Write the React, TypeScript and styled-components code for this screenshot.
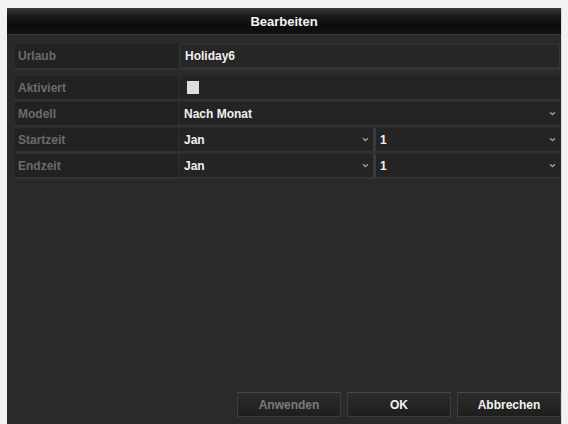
import React from 'react';
import styled, { createGlobalStyle } from 'styled-components';

const GlobalStyle = createGlobalStyle`
  html, body {
    margin: 0;
    padding: 0;
    background: #f2f2f2;
  }
  body {
    font-family: "Liberation Sans", Arial, sans-serif;
  }
`;

const Page = styled.div`
  width: 568px;
  height: 424px;
  padding: 8px 0 0 7px;
  box-sizing: border-box;
  overflow: hidden;
`;

const Dialog = styled.div`
  width: 554px;
  height: 416px;
  background: #2a2a2a;
  display: flex;
  flex-direction: column;
  box-shadow: 1px 0 0 #d8d8d8;
`;

const TitleBar = styled.div`
  height: 26px;
  background: linear-gradient(#3c3c3c 0%, #1a1a1a 30%, #0c0c0c 70%, #121212 100%);
  border-bottom: 1px solid #3a3a3a;
  display: flex;
  align-items: center;
  justify-content: center;
  color: #f4f4f4;
  font-size: 13px;
  font-weight: bold;
`;

const Form = styled.div`
  padding: 9px 1px 0 8px;
  display: flex;
  flex-direction: column;
`;

const Row = styled.div<{ $first?: boolean }>`
  display: grid;
  grid-template-columns: 163px 1fr;
  column-gap: 2px;
  height: ${(p) => (p.$first ? 24 : 23)}px;
  margin-bottom: ${(p) => (p.$first ? 8 : 3)}px;
  box-shadow: 0 2px 0 #333333;
`;

const Label = styled.div`
  background: #222222;
  color: #6b6b6b;
  font-size: 12px;
  font-weight: bold;
  display: flex;
  align-items: center;
  padding-left: 3px;
`;

const Value = styled.div<{ $boxed?: boolean }>`
  background: ${(p) => (p.$boxed ? '#262626' : '#242424')};
  border: ${(p) => (p.$boxed ? '1px solid #343434' : 'none')};
  color: #f0f0f0;
  font-size: 12px;
  font-weight: bold;
  display: flex;
  align-items: center;
  padding-left: 4px;
  box-sizing: border-box;
`;

const SplitValue = styled.div`
  display: grid;
  grid-template-columns: 193px 1fr;
  column-gap: 3px;
  background: #3a3a3a;
`;

const Select = styled.div`
  background: #242424;
  color: #f0f0f0;
  font-size: 12px;
  font-weight: bold;
  display: flex;
  align-items: center;
  justify-content: space-between;
  padding: 0 4px;
`;

const Checkbox = styled.div`
  width: 12px;
  height: 13px;
  background: #dedede;
  margin-left: 3px;
`;

const Footer = styled.div`
  margin-top: auto;
  padding: 0 0 7px 0;
  display: flex;
  justify-content: flex-end;
  gap: 6px;
`;

const Button = styled.button<{ $disabled?: boolean }>`
  width: 104px;
  height: 25px;
  border: 1px solid #3c3c3c;
  border-top-color: #4a4a4a;
  background: linear-gradient(#2c2c2c, #1e1e1e);
  color: ${(p) => (p.$disabled ? '#7c7c7c' : '#f2f2f2')};
  font-family: "Liberation Sans", Arial, sans-serif;
  font-size: 12px;
  font-weight: bold;
  padding: 0;
`;

const Arrow = () => (
  <svg width="7" height="5" viewBox="0 0 7 5">
    <path d="M1 1.2 L3.5 3.6 L6 1.2" fill="none" stroke="#9a9a9a" strokeWidth="1.4" />
  </svg>
);

const App: React.FC = () => {
  return (
    <Page>
      <GlobalStyle />
      <Dialog>
        <TitleBar>Bearbeiten</TitleBar>
        <Form>
          <Row $first>
            <Label>Urlaub</Label>
            <Value $boxed>Holiday6</Value>
          </Row>
          <Row>
            <Label>Aktiviert</Label>
            <Value>
              <Checkbox />
            </Value>
          </Row>
          <Row>
            <Label>Modell</Label>
            <Select>
              <span>Nach Monat</span>
              <Arrow />
            </Select>
          </Row>
          <Row>
            <Label>Startzeit</Label>
            <SplitValue>
              <Select>
                <span>Jan</span>
                <Arrow />
              </Select>
              <Select>
                <span>1</span>
                <Arrow />
              </Select>
            </SplitValue>
          </Row>
          <Row>
            <Label>Endzeit</Label>
            <SplitValue>
              <Select>
                <span>Jan</span>
                <Arrow />
              </Select>
              <Select>
                <span>1</span>
                <Arrow />
              </Select>
            </SplitValue>
          </Row>
        </Form>
        <Footer>
          <Button $disabled>Anwenden</Button>
          <Button>OK</Button>
          <Button>Abbrechen</Button>
        </Footer>
      </Dialog>
    </Page>
  );
};

export default App;
